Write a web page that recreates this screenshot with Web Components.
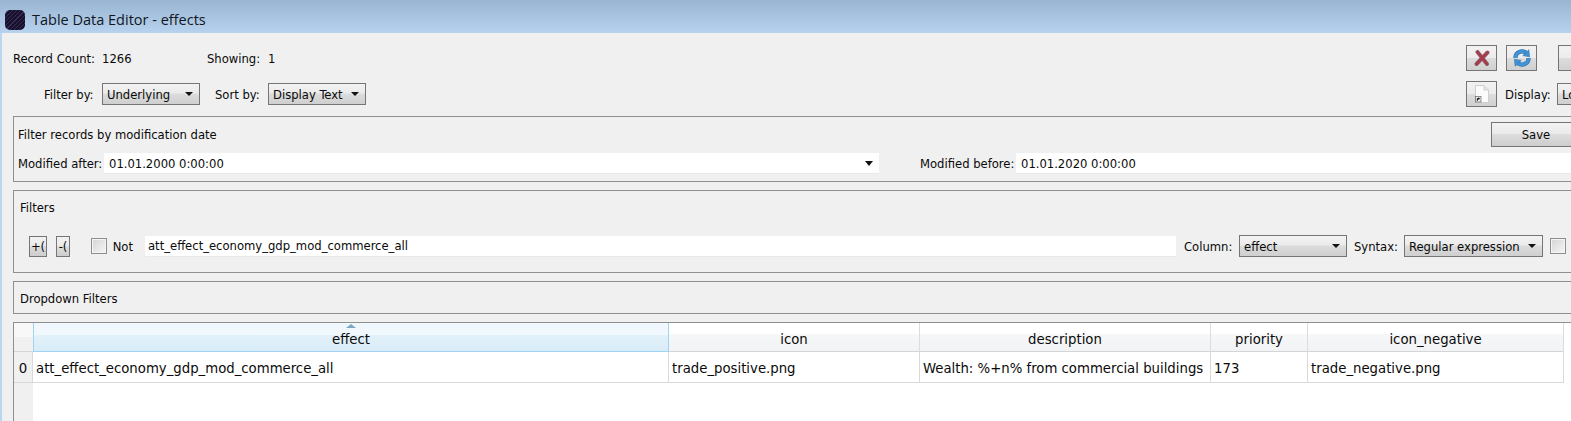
<!DOCTYPE html>
<html>
<head>
<meta charset="utf-8">
<title>Table Data Editor - effects</title>
<style>
    html, body { margin: 0; height: 100%; overflow: hidden; background: #f0f0f0; }
    body {
        font-family: "DejaVu Sans", "Noto Sans", sans-serif;
        font-stretch: condensed;
        font-size: 12.9px;
        color: #0a0a0a;
    }
    editor-window { width: 1660px; height: 421px; }
    .top { display: flex; padding: 12px 0 9px; }
    .counts {
        flex: 0 0 1453px;
        display: grid;
        grid-template-columns: 89px 105px 61px 1fr;
        grid-template-rows: 26px 26px;
        row-gap: 10px;
        align-items: center;
    }
    .tools {
        display: grid;
        grid-template-columns: 40px 51px 1fr;
        grid-template-rows: 26px 26px;
        row-gap: 10px;
        align-items: center;
    }
    .pl-31 { padding-left: 31px; }
    .pl-8 { padding-left: 8px; }
    .ml-1 { margin-left: 1px; }
    .ml--1 { margin-left: -1px; }
    .date-row { display: flex; align-items: center; margin-top: 6px; }
    .date-head { display: flex; justify-content: space-between; height: 25px; margin-top: 5px; align-items: center; }
    .filter-row { display: flex; align-items: center; margin: 20px 0 0 15px; }
</style>
</head>
<body>

<editor-window>
    <span slot="title">Table Data Editor - effects</span>

    <div class="top">
        <div class="counts">
            <span>Record Count:</span><span>1266</span><span>Showing:</span><span>1</span>
            <span class="pl-31">Filter by:</span>
            <drop-select style="width:98px">Underlying</drop-select>
            <span class="pl-8">Sort by:</span>
            <drop-select style="width:98px">Display Text</drop-select>
        </div>
        <div class="tools">
            <tool-button icon="close"></tool-button>
            <tool-button icon="refresh"></tool-button>
            <tool-button class="ml-1" style="width:40px"></tool-button>
            <tool-button icon="file"></tool-button>
            <span class="ml--1">Display:</span>
            <drop-select style="width:60px">Lo</drop-select>
        </div>
    </div>

    <group-box style="height:66px">
        <div class="date-head">
            <span style="margin-left:4px">Filter records by modification date</span>
            <push-button style="width:90px;height:25px;margin-right:78px">Save</push-button>
        </div>
        <div class="date-row">
            <span style="margin-left:4px;width:86px">Modified after:</span>
            <line-field style="width:775px" arrow>01.01.2000 0:00:00</line-field>
            <span style="margin-left:41px;width:96px">Modified before:</span>
            <line-field style="width:600px">01.01.2020 0:00:00</line-field>
        </div>
    </group-box>

    <group-box style="height:83px;margin-top:8px">
        <div style="margin:9px 0 0 6px">Filters</div>
        <div class="filter-row">
            <push-button style="width:18px;height:21px">+(</push-button>
            <push-button style="width:14px;height:21px;margin-left:9px">-(</push-button>
            <check-box style="margin-left:21px;width:42px">Not</check-box>
            <line-field style="width:1031px;margin-left:12px;padding-left:3px">att_effect_economy_gdp_mod_commerce_all</line-field>
            <span style="margin-left:8px;width:55px">Column:</span>
            <drop-select style="width:108px">effect</drop-select>
            <span style="margin-left:7px;width:50px">Syntax:</span>
            <drop-select style="width:139px">Regular expression</drop-select>
            <check-box style="margin-left:7px"></check-box>
        </div>
    </group-box>

    <group-box style="height:33px;margin-top:8px">
        <div style="margin:9px 0 0 6px">Dropdown Filters</div>
    </group-box>

    <data-table style="margin-top:8px"></data-table>
</editor-window>

<script>
    class EditorWindow extends HTMLElement {
        constructor() {
            super();
            const shadow = this.attachShadow({ mode: 'open' });
            shadow.innerHTML = `
                <style>
                    :host { display: block; background: #f0f0f0; }
                    .bar {
                        box-sizing: border-box;
                        height: 33px;
                        padding-top: 6px;
                        display: flex;
                        align-items: center;
                        background: linear-gradient(#9ab5d1, #b7d2ee);
                    }
                    .logo {
                        width: 20px;
                        height: 20px;
                        margin: 0 7px 0 5px;
                        border-radius: 5px;
                        background: repeating-linear-gradient(135deg, #15122a 0 2px, #3b2a5e 2px 3px);
                    }
                    .title {
                        font: 14.5px "Open Sans", "Noto Sans", sans-serif;
                        color: #10161f;
                    }
                    .body {
                        border-left: 2px solid #bcd6f1;
                        padding-left: 11px;
                    }
                </style>
                <div class="bar">
                    <div class="logo"></div>
                    <div class="title"><slot name="title"></slot></div>
                </div>
                <div class="body"><slot></slot></div>
            `;
        }
    }

    class GroupBox extends HTMLElement {
        constructor() {
            super();
            const shadow = this.attachShadow({ mode: 'open' });
            shadow.innerHTML = `
                <style>
                    :host {
                        display: block;
                        box-sizing: border-box;
                        border: 1px solid #8f8f8f;
                        overflow: hidden;
                    }
                </style>
                <slot></slot>
            `;
        }
    }

    class DropSelect extends HTMLElement {
        constructor() {
            super();
            const shadow = this.attachShadow({ mode: 'open' });
            shadow.innerHTML = `
                <style>
                    :host {
                        display: flex;
                        box-sizing: border-box;
                        height: 22px;
                        align-items: center;
                        justify-content: space-between;
                        padding: 0 6px 0 4px;
                        border: 1px solid #757575;
                        background: linear-gradient(#f2f2f2 0, #ebebeb 45%, #dcdcdc 50%, #cfcfcf 100%);
                    }
                    .arrow {
                        width: 0;
                        height: 0;
                        border-left: 4px solid transparent;
                        border-right: 4px solid transparent;
                        border-top: 4px solid #111;
                    }
                </style>
                <span><slot></slot></span>
                <span class="arrow"></span>
            `;
        }
    }

    class PushButton extends HTMLElement {
        constructor() {
            super();
            const shadow = this.attachShadow({ mode: 'open' });
            shadow.innerHTML = `
                <style>
                    :host {
                        display: flex;
                        box-sizing: border-box;
                        align-items: center;
                        justify-content: center;
                        border: 1px solid #757575;
                        background: linear-gradient(#f2f2f2 0, #ebebeb 45%, #dddddd 50%, #cdcdcd 100%);
                    }
                </style>
                <slot></slot>
            `;
        }
    }

    const TOOL_ICONS = {
        close: `<svg width="16" height="16" viewBox="0 0 16 16" fill="none" stroke-linecap="round">
            <path d="M3.5 2 L13 14 M13.5 2.5 L2.5 14" stroke="#8f6a70" stroke-width="4"/>
            <path d="M3.5 2 L13 14 M13.5 2.5 L2.5 14" stroke="#a53c4e" stroke-width="2.8"/>
        </svg>`,
        refresh: `<svg width="20" height="18" viewBox="0 0 20 18" fill="none">
            <path d="M3.4 9 A6.6 6.4 0 0 1 14 3.8 M16.6 9 A6.6 6.4 0 0 1 6 14.2" stroke="#2d6ea8" stroke-width="4.2"/>
            <path d="M3.4 9 A6.6 6.4 0 0 1 14 3.8 M16.6 9 A6.6 6.4 0 0 1 6 14.2" stroke="#4193d8" stroke-width="3.2"/>
            <path d="M16.8 .8 L17.6 7.8 L10.8 6.6 Z M3.2 17.2 L2.4 10.2 L9.2 11.4 Z" fill="#4193d8" stroke="#2d6ea8" stroke-width=".6"/>
        </svg>`,
        file: `<svg width="14" height="18" viewBox="0 0 14 18">
            <path d="M.5 .5 H9 L13.5 5 V17.5 H.5 Z" fill="#fbfbfb" stroke="#cfcfcf"/>
            <path d="M9 .5 V5 H13.5" fill="#e4e4e4" stroke="#cfcfcf"/>
            <rect x=".5" y="11.5" width="5.5" height="5.5" fill="#eee" stroke="#666" stroke-width=".7"/>
            <path d="M1.8 15.8 V14 Q1.8 13 2.8 13 H3.4 V12.2 L5.2 13.6 L3.4 15 V14.2 H3 V15.8 Z" fill="#222"/>
        </svg>`
    };

    class ToolButton extends HTMLElement {
        constructor() {
            super();
            const shadow = this.attachShadow({ mode: 'open' });
            shadow.innerHTML = `
                <style>
                    :host {
                        display: flex;
                        box-sizing: border-box;
                        width: 31px;
                        height: 26px;
                        align-items: center;
                        justify-content: center;
                        border: 1px solid #757575;
                        background: linear-gradient(#f2f2f2 0, #ececec 48%, #dcdcdc 52%, #d0d0d0 100%);
                    }
                </style>
                ${TOOL_ICONS[this.getAttribute('icon')] || ''}
            `;
        }
    }

    class LineField extends HTMLElement {
        constructor() {
            super();
            const shadow = this.attachShadow({ mode: 'open' });
            shadow.innerHTML = `
                <style>
                    :host {
                        display: flex;
                        box-sizing: border-box;
                        height: 21px;
                        align-items: center;
                        justify-content: space-between;
                        padding: 0 6px 0 5px;
                        background: #fff;
                        border-bottom: 1px solid #e9e9e9;
                    }
                    .arrow {
                        display: none;
                        width: 0;
                        height: 0;
                        border-left: 4px solid transparent;
                        border-right: 4px solid transparent;
                        border-top: 5px solid #111;
                    }
                    :host([arrow]) .arrow { display: block; }
                </style>
                <span><slot></slot></span>
                <span class="arrow"></span>
            `;
        }
    }

    class CheckBox extends HTMLElement {
        constructor() {
            super();
            const shadow = this.attachShadow({ mode: 'open' });
            shadow.innerHTML = `
                <style>
                    :host { display: flex; align-items: center; gap: 6px; }
                    .box {
                        box-sizing: border-box;
                        width: 16px;
                        height: 16px;
                        border: 1px solid #8e8e8e;
                        outline: 1px solid #f4f4f4;
                        outline-offset: -2px;
                        background: linear-gradient(135deg, #d4d4d4, #f6f6f6);
                    }
                </style>
                <span class="box"></span>
                <slot></slot>
            `;
        }
    }

    const TABLE_COLUMNS = [
        { name: 'effect', width: 636, value: 'att_effect_economy_gdp_mod_commerce_all', sorted: true },
        { name: 'icon', width: 251, value: 'trade_positive.png' },
        { name: 'description', width: 291, value: 'Wealth: %+n% from commercial buildings' },
        { name: 'priority', width: 97, value: '173' },
        { name: 'icon_negative', width: 256, value: 'trade_negative.png' }
    ];

    class DataTable extends HTMLElement {
        constructor() {
            super();
            const shadow = this.attachShadow({ mode: 'open' });
            const tracks = '19px ' + TABLE_COLUMNS.map(c => c.width + 'px').join(' ') + ' 1fr';
            const heads = TABLE_COLUMNS.map(c => `<div class="head ${c.sorted ? 'sorted' : ''}">${c.name}</div>`).join('');
            const cells = TABLE_COLUMNS.map(c => `<div class="cell">${c.value}</div>`).join('');
            shadow.innerHTML = `
                <style>
                    :host {
                        display: block;
                        height: 99px;
                        border-top: 1px solid #8f8f8f;
                        border-left: 1px solid #8f8f8f;
                        font-size: 14.75px;
                        background: linear-gradient(90deg, #f0f0f0 19px, #fff 19px);
                    }
                    .grid {
                        display: grid;
                        grid-template-columns: ${tracks};
                        grid-template-rows: 29px 31px;
                    }
                    .corner { background: linear-gradient(#f8f8f8 50%, #f1f1f1 50%); border-bottom: 1px solid #d5d5d5; }
                    .head {
                        box-sizing: border-box;
                        display: flex;
                        align-items: flex-end;
                        justify-content: center;
                        padding-bottom: 4px;
                        position: relative;
                        border-right: 1px solid #dcdcdc;
                        border-bottom: 1px solid #d5d5d5;
                        background: linear-gradient(#fff 0, #fff 38%, #f6f7f9 39%, #f2f3f5 100%);
                    }
                    .head.sorted {
                        border-right: 1px solid #9fd3f3;
                        border-left: 1px solid #9fd3f3;
                        border-bottom: 1px solid #9fd3f3;
                        background: linear-gradient(#f0f8fd 0, #f0f8fd 42%, #e2f1fa 43%, #d8ecf7 100%);
                    }
                    .head.sorted::before {
                        content: "";
                        position: absolute;
                        top: 1px;
                        left: 50%;
                        margin-left: -5px;
                        width: 0;
                        height: 0;
                        border-left: 5px solid transparent;
                        border-right: 5px solid transparent;
                        border-bottom: 4px solid #7aa7c4;
                    }
                    .gutter-end { border-bottom: 0; }
                    .row-no {
                        box-sizing: border-box;
                        display: flex;
                        align-items: center;
                        justify-content: center;
                        border-bottom: 1px solid #d9d9d9;
                        border-right: 1px solid #d9d9d9;
                    }
                    .cell {
                        box-sizing: border-box;
                        display: flex;
                        align-items: center;
                        padding-left: 3px;
                        background: #fff;
                        border-right: 1px solid #d9d9d9;
                        border-bottom: 1px solid #d9d9d9;
                        white-space: nowrap;
                    }
                </style>
                <div class="grid">
                    <div class="corner"></div>${heads}<div class="gutter-end"></div>
                    <div class="row-no">0</div>${cells}<div></div>
                </div>
            `;
        }
    }

    customElements.define('editor-window', EditorWindow);
    customElements.define('group-box', GroupBox);
    customElements.define('drop-select', DropSelect);
    customElements.define('push-button', PushButton);
    customElements.define('tool-button', ToolButton);
    customElements.define('line-field', LineField);
    customElements.define('check-box', CheckBox);
    customElements.define('data-table', DataTable);
</script>
</body>
</html>
